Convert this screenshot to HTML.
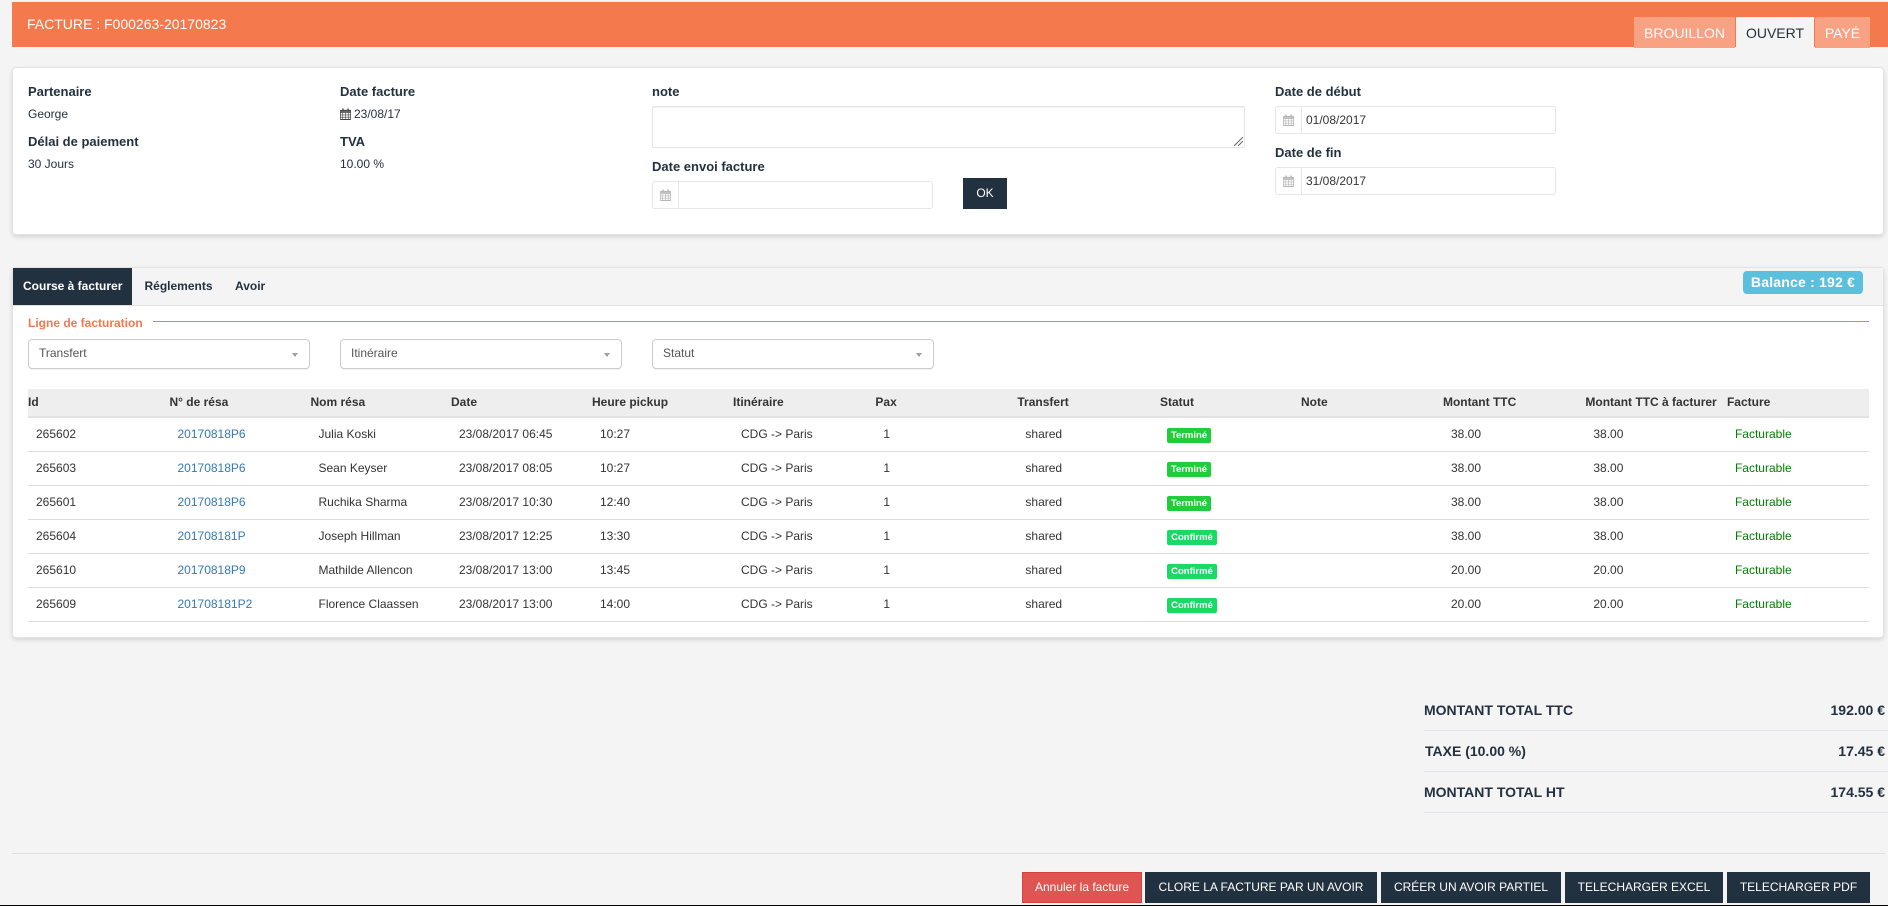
<!DOCTYPE html>
<html lang="fr">
<head>
<meta charset="utf-8">
<title>Facture F000263-20170823</title>
<style>
html,body{margin:0;padding:0}
body{width:1888px;height:906px;position:relative;overflow:hidden;background:#f4f4f4;font-family:"Liberation Sans",Arial,sans-serif;font-size:12px;color:#23313f}
.a,.t{position:absolute;box-sizing:border-box}
.t{white-space:nowrap;line-height:20px}
.hd{left:12px;top:2px;width:1876px;height:45px;background:#f4794d}
.st{top:17px;height:31px;font-size:14px;line-height:32px;text-align:center;background:#f8a183;color:#fff}
.card{background:#fff;border:1px solid #e3e3e3;border-radius:4px;box-shadow:0 2px 4px rgba(0,0,0,.13)}
.lb{font-size:13px;font-weight:bold;color:#23313f}
.inp{background:#fff;border:1px solid #e5e6e9;border-radius:3px}
.inp .ad{position:absolute;left:0;top:0;bottom:0;width:25px;border-right:1px solid #e5e6e9}
.inp svg{position:absolute;left:7px;top:7px}
.inp span{position:absolute;left:30px;top:0;line-height:26px;font-size:12px;color:#333}
.sel{top:339px;width:282px;height:30px;background:#fff;border:1px solid #ccc;border-radius:4px;box-shadow:0 1px 1px rgba(0,0,0,.05)}
.sel span{position:absolute;left:10px;top:3px;line-height:20px;color:#555}
.sel i{position:absolute;right:11px;top:13px;width:0;height:0;border:3.500px solid transparent;border-top:4px solid #a0a0a0;border-bottom:0}
.tb{position:absolute;left:28px;top:389px;width:1841px;border-collapse:collapse;table-layout:fixed;font-size:12px;color:#333}
.tb th{height:25px;padding:0 0 2px 0;background:#eee;border-bottom:2px solid #e2e2e2;text-align:left;font-weight:bold;color:#333;white-space:nowrap}
.tb td{height:31px;padding:0 0 2px 8px;border-bottom:1px solid #dcdcdc;white-space:nowrap;overflow:visible}
.tb a{color:#337ab7;text-decoration:none}
.bd{display:inline-block;width:44px;height:15px;line-height:15px;margin-left:-1px;text-align:center;border-radius:2px;background:#22cd3d;color:#fff;font-size:9.500px;font-weight:bold;vertical-align:middle;position:relative;top:2px}
.bd.c{width:50px;background:#1bd964}
.g{color:#008000}
.tl{font-size:14px;font-weight:bold;color:#23313f}
.rule{left:1424px;width:464px;height:1px;background:#e3e4ea}
.btn{top:872px;height:31px;line-height:31px;text-align:center;color:#fff;background:#22313f;font-size:12px;white-space:nowrap}
</style>
</head>
<body>
<svg width="0" height="0" style="position:absolute">
<symbol id="cal" viewBox="0 0 12 13">
<path d="M1 2.500h10a.7.7 0 0 1 .7.7v8.600a.7.7 0 0 1-.7.7H1a.7.7 0 0 1-.7-.7V3.200a.7.7 0 0 1 .7-.7z" fill="none" stroke="currentColor"/>
<path d="M.5 5h11M.5 7.500h11M.5 10h11M3 5v7.500M6 5v7.500M9 5v7.500" stroke="currentColor" stroke-width=".7" fill="none"/>
<path d="M2.500 .5h1.500v3h-1.500zM8 .5h1.500v3h-1.500z" fill="currentColor"/>
<rect x=".5" y="2.500" width="11" height="2" fill="currentColor" opacity=".8"/>
</symbol>
</svg>

<div class="a hd"></div>
<div class="t" style="left:27px;top:14px;font-size:14px;color:#fff">FACTURE : F000263-20170823</div>
<div class="a st" style="left:1634px;width:101px">BROUILLON</div>
<div class="a st" style="left:1736px;width:78px;background:#f4f4f4;color:#23313f">OUVERT</div>
<div class="a st" style="left:1815px;width:55px">PAYÉ</div>

<div class="a card" style="left:12px;top:67px;width:1872px;height:168px"></div>
<div class="t lb" style="left:28px;top:82px">Partenaire</div>
<div class="t" style="left:28px;top:104px">George</div>
<div class="t lb" style="left:28px;top:132px">Délai de paiement</div>
<div class="t" style="left:28px;top:154px">30 Jours</div>
<div class="t lb" style="left:340px;top:82px">Date facture</div>
<svg class="a" style="left:340px;top:108px;color:#444" width="11" height="12"><use href="#cal"/></svg>
<div class="t" style="left:354px;top:104px">23/08/17</div>
<div class="t lb" style="left:340px;top:132px">TVA</div>
<div class="t" style="left:340px;top:154px">10.00 %</div>

<div class="t lb" style="left:652px;top:82px">note</div>
<div class="a inp" style="left:652px;top:106px;width:593px;height:42px;border-radius:2px;box-shadow:inset 0 1px 1px rgba(0,0,0,.06)">
<svg style="left:auto;right:1px;top:auto;bottom:1px" width="9" height="9"><path d="M0 9L9 0M4 9L9 4" stroke="#666" stroke-width="1"/></svg>
</div>
<div class="t lb" style="left:652px;top:157px">Date envoi facture</div>
<div class="a inp" style="left:652px;top:181px;width:281px;height:28px"><div class="ad"></div><svg style="color:#b5b5b5" width="11" height="12"><use href="#cal"/></svg></div>
<div class="a" style="left:963px;top:178px;width:44px;height:31px;line-height:31px;background:#22313f;color:#fff;text-align:center">OK</div>

<div class="t lb" style="left:1275px;top:82px">Date de début</div>
<div class="a inp" style="left:1275px;top:106px;width:281px;height:28px"><div class="ad"></div><svg style="color:#b5b5b5" width="11" height="12"><use href="#cal"/></svg><span>01/08/2017</span></div>
<div class="t lb" style="left:1275px;top:143px">Date de fin</div>
<div class="a inp" style="left:1275px;top:167px;width:281px;height:28px"><div class="ad"></div><svg style="color:#b5b5b5" width="11" height="12"><use href="#cal"/></svg><span>31/08/2017</span></div>

<div class="a card" style="left:12px;top:267px;width:1872px;height:371px"></div>
<div class="a" style="left:13px;top:268px;width:1870px;height:38px;background:#f4f4f4;border-bottom:1px solid #e0e0e0"></div>
<div class="a" style="left:13px;top:268px;width:119px;height:37px;background:#22313f"></div>
<div class="t" style="left:23px;top:276px;font-weight:bold;color:#fff">Course à facturer</div>
<div class="t" style="left:144.500px;top:276px;font-weight:bold;color:#23313f">Réglements</div>
<div class="t" style="left:235px;top:276px;font-weight:bold;color:#23313f">Avoir</div>
<div class="t" style="left:1743px;top:271px;width:120px;height:23px;line-height:22px;text-align:center;background:#5bc0de;border-radius:4px;color:#fff;font-size:14px;letter-spacing:.2px;font-weight:bold">Balance : 192 €</div>

<div class="t" style="left:28px;top:313px;font-weight:bold;color:#f4794d">Ligne de facturation</div>
<div class="a" style="left:153px;top:321px;width:1716px;height:1px;background:#f4794d"></div>

<div class="a sel" style="left:28px"><span>Transfert</span><i></i></div>
<div class="a sel" style="left:340px"><span>Itinéraire</span><i></i></div>
<div class="a sel" style="left:652px"><span>Statut</span><i></i></div>

<table class="tb">
<colgroup><col style="width:141.500px"><col style="width:141px"><col style="width:140.500px"><col style="width:141px"><col style="width:141px"><col style="width:142.400px"><col style="width:142px"><col style="width:142.600px"><col style="width:141px"><col style="width:142px"><col style="width:142.400px"><col style="width:141.600px"><col style="width:142px"></colgroup>
<thead><tr><th>Id</th><th>N° de résa</th><th>Nom résa</th><th>Date</th><th>Heure pickup</th><th>Itinéraire</th><th>Pax</th><th>Transfert</th><th>Statut</th><th>Note</th><th>Montant TTC</th><th>Montant TTC à facturer</th><th>Facture</th></tr></thead>
<tbody>
<tr><td>265602</td><td><a>20170818P6</a></td><td>Julia Koski</td><td>23/08/2017 06:45</td><td>10:27</td><td>CDG -&gt; Paris</td><td>1</td><td>shared</td><td><span class="bd">Terminé</span></td><td></td><td>38.00</td><td>38.00</td><td class="g">Facturable</td></tr>
<tr><td>265603</td><td><a>20170818P6</a></td><td>Sean Keyser</td><td>23/08/2017 08:05</td><td>10:27</td><td>CDG -&gt; Paris</td><td>1</td><td>shared</td><td><span class="bd">Terminé</span></td><td></td><td>38.00</td><td>38.00</td><td class="g">Facturable</td></tr>
<tr><td>265601</td><td><a>20170818P6</a></td><td>Ruchika Sharma</td><td>23/08/2017 10:30</td><td>12:40</td><td>CDG -&gt; Paris</td><td>1</td><td>shared</td><td><span class="bd">Terminé</span></td><td></td><td>38.00</td><td>38.00</td><td class="g">Facturable</td></tr>
<tr><td>265604</td><td><a>201708181P</a></td><td>Joseph Hillman</td><td>23/08/2017 12:25</td><td>13:30</td><td>CDG -&gt; Paris</td><td>1</td><td>shared</td><td><span class="bd c">Confirmé</span></td><td></td><td>38.00</td><td>38.00</td><td class="g">Facturable</td></tr>
<tr><td>265610</td><td><a>20170818P9</a></td><td>Mathilde Allencon</td><td>23/08/2017 13:00</td><td>13:45</td><td>CDG -&gt; Paris</td><td>1</td><td>shared</td><td><span class="bd c">Confirmé</span></td><td></td><td>20.00</td><td>20.00</td><td class="g">Facturable</td></tr>
<tr><td>265609</td><td><a>201708181P2</a></td><td>Florence Claassen</td><td>23/08/2017 13:00</td><td>14:00</td><td>CDG -&gt; Paris</td><td>1</td><td>shared</td><td><span class="bd c">Confirmé</span></td><td></td><td>20.00</td><td>20.00</td><td class="g">Facturable</td></tr>
</tbody>
</table>

<div class="t tl" style="left:1424px;top:700px">MONTANT TOTAL TTC</div>
<div class="t tl" style="right:3px;top:700px">192.00 €</div>
<div class="a rule" style="top:730px"></div>
<div class="t tl" style="left:1425px;top:741px">TAXE (10.00 %)</div>
<div class="t tl" style="right:3px;top:741px">17.45 €</div>
<div class="a rule" style="top:771px"></div>
<div class="t tl" style="left:1424px;top:782px">MONTANT TOTAL HT</div>
<div class="t tl" style="right:3px;top:782px">174.55 €</div>
<div class="a rule" style="top:812px"></div>

<div class="a" style="left:12px;top:853px;width:1873px;height:1px;background:#e0e0e0"></div>
<div class="a btn" style="left:1022px;width:120px;background:#de5551;border:1px solid #d9413c;line-height:29px">Annuler la facture</div>
<div class="a btn" style="left:1145px;width:232px">CLORE LA FACTURE PAR UN AVOIR</div>
<div class="a btn" style="left:1381px;width:180px">CRÉER UN AVOIR PARTIEL</div>
<div class="a btn" style="left:1565px;width:158px">TELECHARGER EXCEL</div>
<div class="a btn" style="left:1727px;width:143px">TELECHARGER PDF</div>
<div class="a" style="left:0;top:905px;width:1888px;height:1px;background:#000"></div>
</body>
</html>
